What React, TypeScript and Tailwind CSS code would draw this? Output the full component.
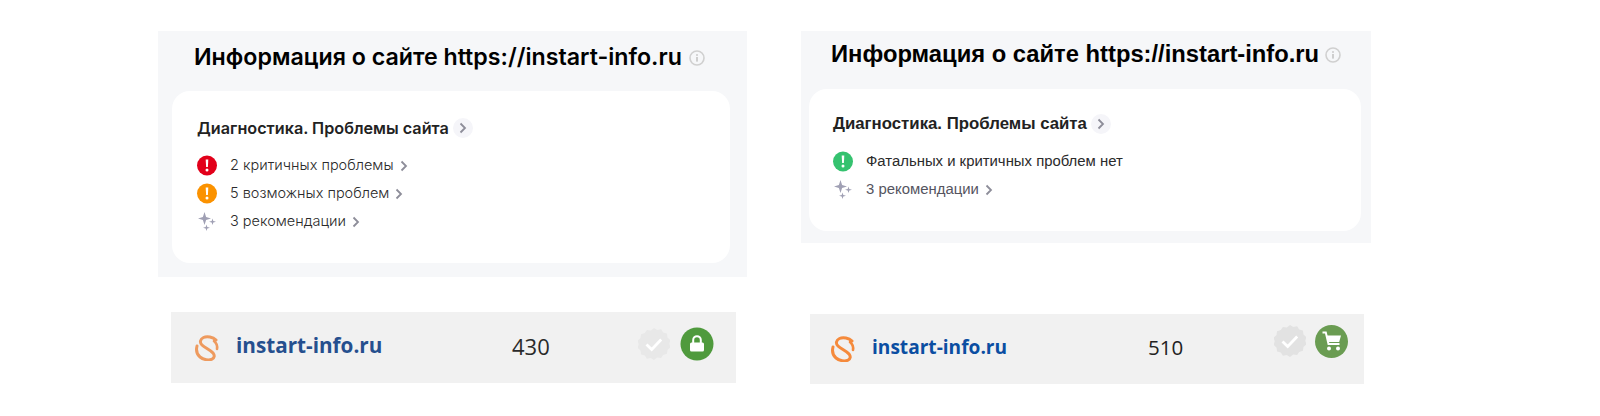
import React from "react";

const Chevron = ({ className = "" }: { className?: string }) => (
  <svg width="8" height="12" viewBox="0 0 8 12" fill="none" className={className}>
    <path d="M1.5 1.5 6 6l-4.5 4.5" stroke="#8d8d99" strokeWidth="1.8" />
  </svg>
);

const Info = () => (
  <svg width="16" height="16" viewBox="0 0 16 16" fill="none">
    <circle cx="8" cy="8" r="7" stroke="#d0d0d0" strokeWidth="1.6" />
    <rect x="7.2" y="7" width="1.6" height="4.6" fill="#c4c4c4" />
    <rect x="7.2" y="4.2" width="1.6" height="1.6" fill="#c4c4c4" />
  </svg>
);

const Alert = ({ color }: { color: string }) => (
  <svg width="21" height="21" viewBox="0 0 20 20">
    <circle cx="10" cy="10" r="10" fill={color} />
    <path d="M8.7 4h2.6l-.4 7.6H9.100z" fill="#fff" />
    <circle cx="10" cy="14.400" r="1.500" fill="#fff" />
  </svg>
);

const Sparkles = () => (
  <svg width="20" height="20" viewBox="0 0 20 20" fill="#a0a0b4">
    <path d="M7.500 1 9.100 6.100 14 7.500 9.100 8.900 7.500 14 5.900 8.900 1 7.500 5.900 6.100z" />
    <path d="M15.500 7.500 16.300 10 19 10.800 16.300 11.600 15.500 14 14.700 11.600 12 10.800 14.700 10z" />
    <path d="M9.500 13.500 10.300 16 13 16.800 10.300 17.600 9.500 20 8.700 17.600 6 16.800 8.700 16z" />
  </svg>
);

const Row = ({ icon, text, chevron = true, font }: { icon: React.ReactNode; text: string; chevron?: boolean; font: string }) => (
  <div className="flex h-[28px] items-center">
    <span className="flex w-[20px] justify-center">{icon}</span>
    <span className={`ml-[13px] ${font}`}>{text}</span>
    {chevron && <Chevron className="ml-[6px] mt-[1px]" />}
  </div>
);

const Badge = ({ fill }: { fill: string }) => (
  <svg width="32" height="32" viewBox="0 0 32 32">
    <path
      d="M16 0l3.300 2 3.800-.7 2.100 3.200 3.700 1.100.6 3.800 2.900 2.600-1.100 3.700 1.100 3.700-2.900 2.600-.6 3.800-3.700 1.100-2.100 3.200-3.800-.7L16 32l-3.300-2-3.800.7-2.100-3.200-3.700-1.100-.6-3.800L-.4 20l1.100-3.700L-.4 12.600l2.900-2.600.6-3.800 3.700-1.100 2.100-3.200 3.800.7z"
      fill={fill}
    />
    <path d="M8.500 16.500l5.200 5 9.500-10" fill="none" stroke="#fff" strokeWidth="2.800" />
  </svg>
);

const Lock = () => (
  <svg width="34" height="34" viewBox="0 0 34 34">
    <circle cx="17" cy="17" r="16.500" fill="#4f9a3d" />
    <path d="M13.200 16v-3a3.800 3.800 0 0 1 7.600 0v3" fill="none" stroke="#fff" strokeWidth="2" />
    <rect x="10" y="15.500" width="14" height="9" rx="1.500" fill="#fff" />
  </svg>
);

const Cart = () => (
  <svg width="33" height="33" viewBox="0 0 33 33">
    <circle cx="16.500" cy="16.500" r="16.500" fill="#6a9c52" />
    <path d="M7.500 7.500h3.300l2.700 11.500h11" fill="none" stroke="#fff" strokeWidth="2" />
    <path d="M11.500 10.500H26l-1.800 6.500H13z" fill="#fff" />
    <circle cx="14" cy="23.500" r="2" fill="#fff" />
    <circle cx="23" cy="23.500" r="2" fill="#fff" />
  </svg>
);

const Logo = ({ stroke }: { stroke: string }) => (
  <svg width="25" height="26" viewBox="0 0 25 26" fill="none">
    <path d="M21 5C18 2 12 .800 8.500 2.500 5 4.200 4.500 7.500 7 10c3 3 8.500 5 11 8 2 2.500 1.500 5-1 6.200-3 1.300-8.500.8-12-2.200C2 19.500 1 15 2 11" stroke={stroke} strokeWidth="3" strokeLinecap="round" />
    <path d="M19 6c2.500 2 3.500 5 3 8" stroke={stroke} strokeWidth="2.600" strokeLinecap="round" />
  </svg>
);

export default function App() {
  return (
    <div className="flex h-[416px] w-[1600px] items-start bg-white pt-[31px]">
      <div className="ml-[158px] flex w-[589px] flex-col">
        <section className="flex h-[246px] flex-col bg-[#f6f7f9] pt-[13px] pr-[17px] pb-[14px] pl-[14px] font-['Inter',sans-serif]">
          <div className="flex h-[26px] items-center pl-[22px]">
            <h2 className="text-[23.200px] font-semibold whitespace-nowrap text-black">Информация о сайте https://instart-info.ru</h2>
            <span className="ml-[7px] mt-[2px]"><Info /></span>
          </div>
          <div className="mt-[21px] flex-1 rounded-[18px] bg-white px-[25px] pt-[26px]">
            <div className="flex h-[22px] items-center">
              <span className="text-[16.200px] font-semibold text-[#222]">Диагностика. Проблемы сайта</span>
              <span className="ml-[4px] flex h-[20px] w-[20px] items-center justify-center rounded-full bg-[#f5f5f9]"><Chevron /></span>
            </div>
            <div className="mt-[12px]">
              <Row font="text-[14.500px] font-light text-[#2b2b2b]" icon={<Alert color="#e2001a" />} text="2 критичных проблемы" />
              <Row font="text-[14.500px] font-light text-[#2b2b2b]" icon={<Alert color="#fb9200" />} text="5 возможных проблем" />
              <Row font="text-[14.500px] font-light text-[#2b2b2b]" icon={<Sparkles />} text="3 рекомендации" />
            </div>
          </div>
        </section>
        <div className="mt-[35px] ml-[13px] flex h-[71px] w-[565px] items-center bg-[#f1f1f1] font-['Open_Sans',sans-serif]">
          <span className="ml-[24px]"><Logo stroke="#ee9a5e" /></span>
          <span className="-mt-[3px] ml-[16px] w-[276px] text-[20.700px] font-bold text-[#254f8e]">instart-info.ru</span>
          <span className="-mt-[3px] text-[22px] text-[#2a2a2a]">430</span>
          <span className="-mt-[8px] ml-[88px]"><Badge fill="#e8e8e8" /></span>
          <span className="-mt-[8px] ml-[10px]"><Lock /></span>
        </div>
      </div>

      <div className="ml-[54px] flex w-[570px] flex-col">
        <section className="flex h-[212px] flex-col bg-[#f6f7f9] pt-[10px] pr-[10px] pb-[12px] pl-[8px] font-['Liberation_Sans',sans-serif]">
          <div className="flex h-[26px] items-center pl-[22px]">
            <h2 className="text-[23.750px] font-bold whitespace-nowrap text-black">Информация о сайте https://instart-info.ru</h2>
            <span className="ml-[6px] mt-[2px]"><Info /></span>
          </div>
          <div className="mt-[22px] flex-1 rounded-[18px] bg-white px-[24px] pt-[24px]">
            <div className="flex h-[22px] items-center">
              <span className="text-[16.800px] font-bold text-[#222]">Диагностика. Проблемы сайта</span>
              <span className="ml-[4px] flex h-[20px] w-[20px] items-center justify-center rounded-full bg-[#f5f5f9]"><Chevron /></span>
            </div>
            <div className="mt-[12px]">
              <Row font="text-[14.900px] text-[#2b2b2b]" chevron={false} icon={<Alert color="#35c26f" />} text="Фатальных и критичных проблем нет" />
              <Row font="text-[14.900px] text-[#55555f]" icon={<Sparkles />} text="3 рекомендации" />
            </div>
          </div>
        </section>
        <div className="mt-[71px] ml-[9px] flex h-[70px] w-[554px] items-center bg-[#f1f1f1] font-['Open_Sans',sans-serif]">
          <span className="ml-[21px]"><Logo stroke="#f58a3c" /></span>
          <span className="-mt-[3px] ml-[16px] w-[276px] text-[19.100px] font-bold text-[#0b4ea2]">instart-info.ru</span>
          <span className="-mt-[4px] text-[20.500px] text-[#222]">510</span>
          <span className="-mt-[16px] ml-[91px]"><Badge fill="#e2e2e2" /></span>
          <span className="-mt-[16px] ml-[9px]"><Cart /></span>
        </div>
      </div>
    </div>
  );
}
